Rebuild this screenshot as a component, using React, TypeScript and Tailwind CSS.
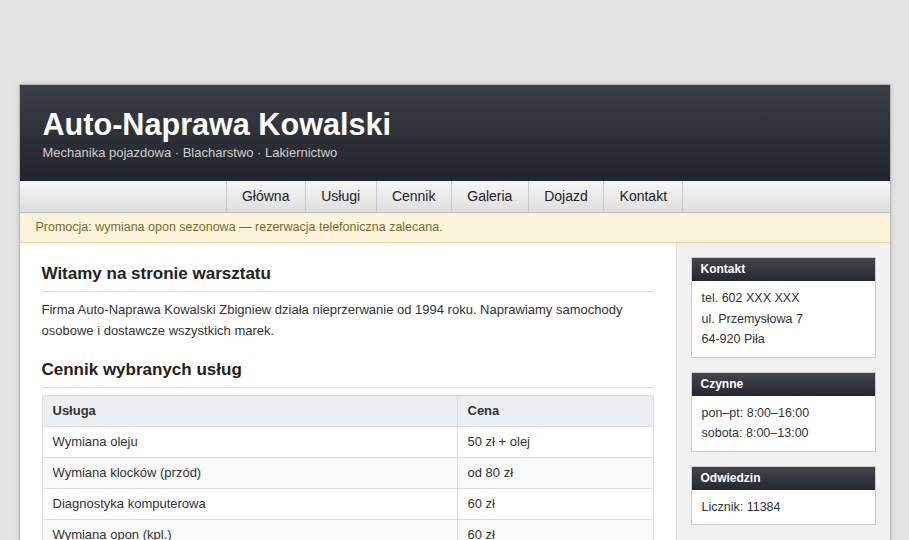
const nav = ["Główna", "Usługi", "Cennik", "Galeria", "Dojazd", "Kontakt"];

const prices = [
  ["Wymiana oleju", "50 zł + olej"],
  ["Wymiana klocków (przód)", "od 80 zł"],
  ["Diagnostyka komputerowa", "60 zł"],
  ["Wymiana opon (kpl.)", "60 zł"],
  ["Geometria kół", "120 zł"],
];

function SideBox({ title, lines }: { title: string; lines: string[] }) {
  return (
    <div className="mb-[14px] border border-[#cccccc] bg-white">
      <div className="h-[23px] bg-gradient-to-b from-[#43464d] to-[#25282e] px-[9px] text-[12px] font-bold leading-[23px] text-white">
        {title}
      </div>
      <div className="px-[10px] py-[7px] text-[12.5px] leading-[20.5px] text-[#333]">
        {lines.map((l) => (
          <div key={l}>{l}</div>
        ))}
      </div>
    </div>
  );
}

export default function App() {
  return (
    <div className="min-h-[540px] bg-[#e5e5e5] pt-[84px] font-['Liberation_Sans',Arial,sans-serif]">
      <div className="mx-auto w-[872px] border border-[#b5b5b5] bg-white shadow-[0_0_6px_rgba(0,0,0,0.15)]">
        <header className="h-[96px] bg-gradient-to-b from-[#3b3e46] to-[#22252b] px-[23px] pt-[21px]">
          <h1 className="text-[30.6px] font-bold leading-[36px] text-white">Auto-Naprawa Kowalski</h1>
          <p className="mt-[1px] text-[13px] text-[#cfcfcf]">
            Mechanika pojazdowa · Blacharstwo · Lakiernictwo
          </p>
        </header>
        <nav className="flex h-[32px] justify-center border-b border-[#bcbcbc] bg-gradient-to-b from-[#f6f6f6] to-[#dedede]">
          <ul className="flex border-l border-[#c8c8c8]">
            {nav.map((n) => (
              <li
                key={n}
                className="border-r border-[#c8c8c8] px-[15.4px] text-[14px] leading-[31px] text-[#222]"
              >
                {n}
              </li>
            ))}
          </ul>
        </nav>
        <div className="h-[30px] border-b border-[#e6d69c] bg-[#fcf5db] px-[16px] text-[12.5px] leading-[29px] text-[#7b6a2c]">
          Promocja: wymiana opon sezonowa — rezerwacja telefoniczna zalecana.
        </div>
        <div className="flex">
          <main className="w-[656px] px-[22px] pb-[24px] pt-[21px]">
            <h2 className="border-b border-[#dddddd] pb-[7px] text-[17px] font-bold leading-[20px] text-[#222]">
              Witamy na stronie warsztatu
            </h2>
            <p className="mt-[7px] text-[13px] leading-[21px] text-[#333]">
              Firma Auto-Naprawa Kowalski Zbigniew działa nieprzerwanie od 1994 roku. Naprawiamy samochody osobowe i
              dostawcze wszystkich marek.
            </p>
            <h2 className="mt-[19px] border-b border-[#dddddd] pb-[7px] text-[17px] font-bold leading-[20px] text-[#222]">
              Cennik wybranych usług
            </h2>
            <table className="mt-[7px] w-full border-collapse text-[13px] text-[#333]">
              <thead>
                <tr className="bg-[#eceff2]">
                  <th className="h-[31px] w-[415px] border border-[#dcdcdc] px-[10px] text-left font-bold text-[#333]">
                    Usługa
                  </th>
                  <th className="h-[31px] border border-[#dcdcdc] px-[10px] text-left font-bold text-[#333]">Cena</th>
                </tr>
              </thead>
              <tbody>
                {prices.map(([s, c], i) => (
                  <tr key={s} className={i % 2 === 1 ? "bg-[#f9f9f9]" : "bg-white"}>
                    <td className="h-[31px] border border-[#dcdcdc] px-[10px]">{s}</td>
                    <td className="h-[31px] border border-[#dcdcdc] px-[10px]">{c}</td>
                  </tr>
                ))}
              </tbody>
            </table>
          </main>
          <aside className="flex-1 border-l border-[#dcdcdc] bg-[#f1f1f1] px-[14px] pt-[14px]">
            <SideBox title="Kontakt" lines={["tel. 602 XXX XXX", "ul. Przemysłowa 7", "64-920 Piła"]} />
            <SideBox title="Czynne" lines={["pon–pt: 8:00–16:00", "sobota: 8:00–13:00"]} />
            <SideBox title="Odwiedzin" lines={["Licznik: 11384"]} />
          </aside>
        </div>
      </div>
    </div>
  );
}
